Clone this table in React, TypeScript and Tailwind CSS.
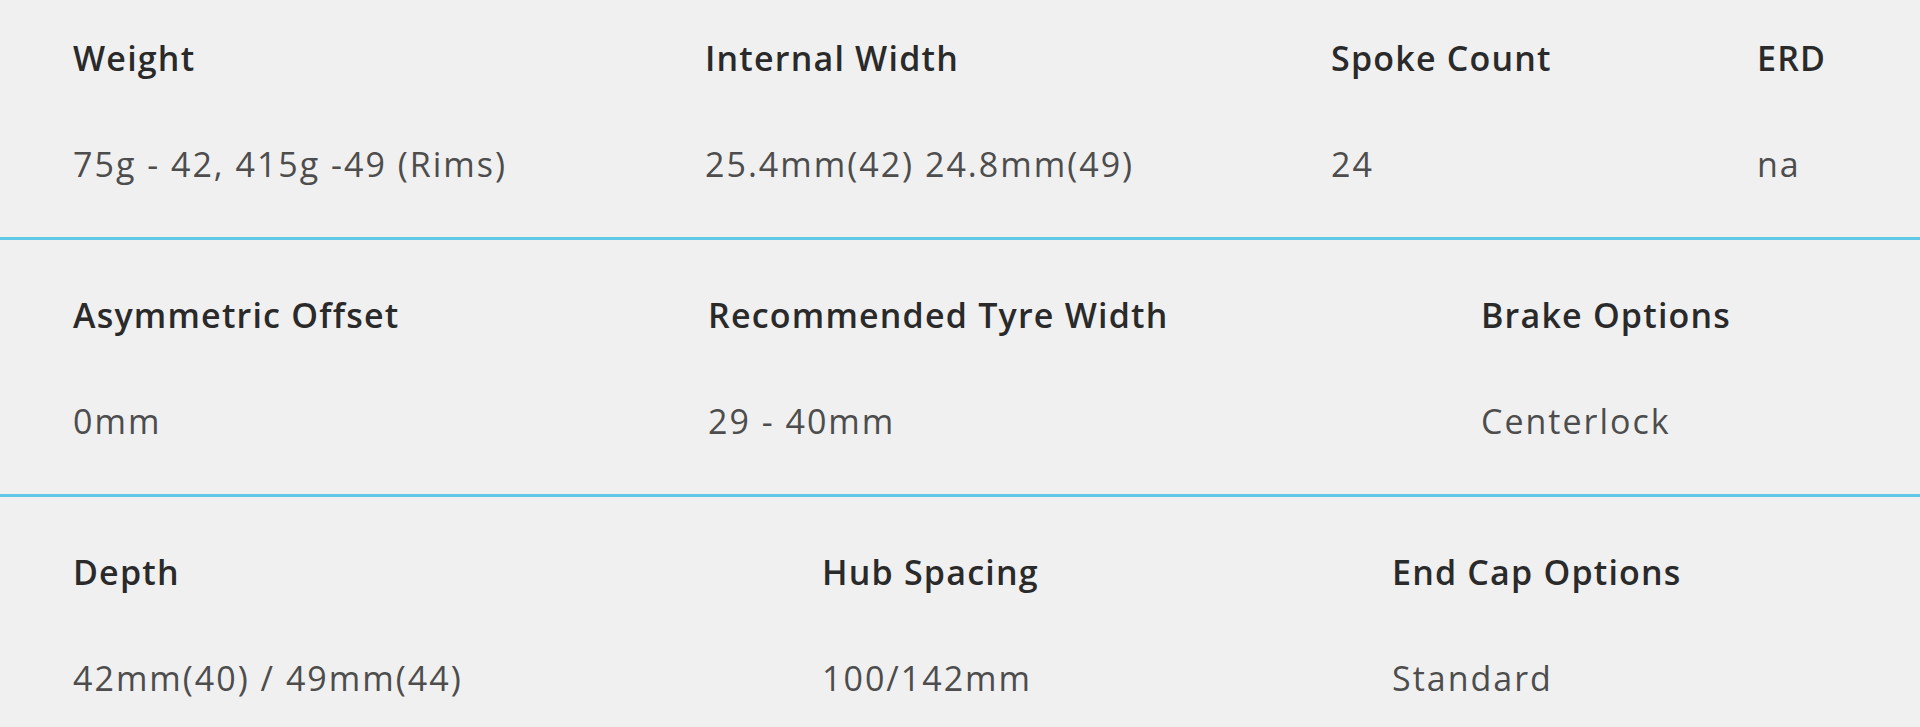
const font = { fontFamily: "'Open Sans', 'Noto Sans', sans-serif" };

type Spec = { label: string; value: string };

const rows: { cols: string; pad: string; items: Spec[] }[] = [
  {
    cols: "grid-cols-[632px_626px_426px_1fr]",
    pad: "pt-[38px] pb-[53px]",
    items: [
      { label: "Weight", value: "75g - 42, 415g -49 (Rims)" },
      { label: "Internal Width", value: "25.4mm(42) 24.8mm(49)" },
      { label: "Spoke Count", value: "24" },
      { label: "ERD", value: "na" },
    ],
  },
  {
    cols: "grid-cols-[635px_773px_1fr]",
    pad: "pt-[55px] pb-[53px]",
    items: [
      { label: "Asymmetric Offset", value: "0mm" },
      { label: "Recommended Tyre Width", value: "29 - 40mm" },
      { label: "Brake Options", value: "Centerlock" },
    ],
  },
  {
    cols: "grid-cols-[749px_570px_1fr]",
    pad: "pt-[55px] pb-[53px]",
    items: [
      { label: "Depth", value: "42mm(40) / 49mm(44)" },
      { label: "Hub Spacing", value: "100/142mm" },
      { label: "End Cap Options", value: "Standard" },
    ],
  },
];

export default function App() {
  return (
    <div className="w-[1920px] h-[727px] overflow-hidden bg-[#f0f0f0]" style={font}>
      {rows.map((row, i) => (
        <div
          key={i}
          className={`grid ${row.cols} pl-[73px] ${row.pad} ${i < rows.length - 1 ? "border-b-[3px] border-[#5fc8e6]" : ""}`}
        >
          {row.items.map((it) => (
            <div key={it.label} className="flex flex-col gap-[66px]">
              <span className="text-[34px] leading-[40px] font-semibold tracking-[1.2px] text-[#2a2a2a]">
                {it.label}
              </span>
              <span className="text-[34px] leading-[40px] tracking-[2px] text-[#4d4d4d]">{it.value}</span>
            </div>
          ))}
        </div>
      ))}
    </div>
  );
}
